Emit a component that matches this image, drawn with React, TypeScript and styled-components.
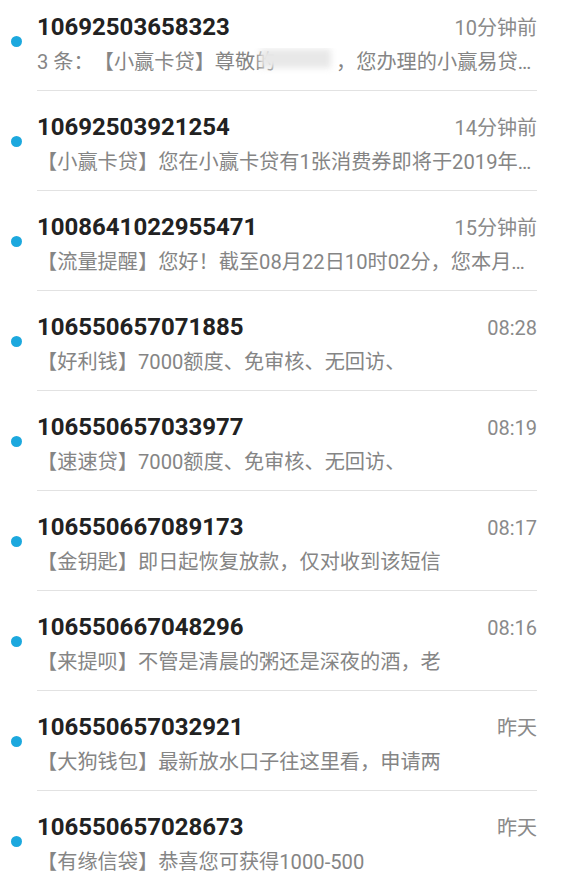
import React from 'react';
import styled, { createGlobalStyle } from 'styled-components';

const GlobalStyle = createGlobalStyle`
  html, body {
    margin: 0;
    padding: 0;
    background: #ffffff;
  }
  body {
    width: 562px;
    height: 880px;
    overflow: hidden;
    font-family: Roboto, "Noto Sans CJK SC", sans-serif;
    text-spacing-trim: space-all;
  }
`;

const List = styled.div`
  margin-top: -9px;
  display: flex;
  flex-direction: column;
`;

const Item = styled.div`
  display: flex;
  align-items: flex-start;
  height: 100px;
`;

const UnreadDot = styled.span`
  flex: none;
  width: 11px;
  height: 11px;
  margin: 45px 15px 0 11px;
  border-radius: 50%;
  background: #1ca8de;
`;

const Body = styled.div`
  flex: 1;
  min-width: 0;
  height: 100px;
  box-sizing: border-box;
  margin-right: 25px;
  padding-top: 21px;
  border-bottom: 1px solid #e2e2e2;
`;

const Header = styled.div`
  display: flex;
  align-items: baseline;
  justify-content: space-between;
  line-height: 30px;
`;

const Sender = styled.span`
  font-size: 24px;
  font-weight: 700;
  color: #222222;
`;

const Time = styled.span`
  font-size: 20px;
  color: #8a8a8a;
`;

const Preview = styled.div`
  margin-top: 5px;
  font-size: 20.2px;
  line-height: 28px;
  color: #858585;
  white-space: nowrap;
  overflow: hidden;
  text-spacing-trim: space-all;
`;

// blurred-out name in the first message
const Masked = styled.span`
  position: relative;
  display: inline-block;
  color: transparent;

  &::after {
    content: '';
    position: absolute;
    left: -15px;
    right: 5px;
    top: 1px;
    height: 19px;
    background: #e8e8e8;
    filter: blur(3px);
  }
`;

interface Message {
  sender: string;
  time: string;
  preview: React.ReactNode;
}

const messages: Message[] = [
  {
    sender: '10692503658323',
    time: '10分钟前',
    preview: (
      <>
        3 条：【小赢卡贷】尊敬的<Masked>某某某</Masked>，您办理的小赢易贷…
      </>
    ),
  },
  {
    sender: '10692503921254',
    time: '14分钟前',
    preview: '【小赢卡贷】您在小赢卡贷有1张消费券即将于2019年…',
  },
  {
    sender: '1008641022955471',
    time: '15分钟前',
    preview: '【流量提醒】您好！截至08月22日10时02分，您本月…',
  },
  {
    sender: '106550657071885',
    time: '08:28',
    preview: '【好利钱】7000额度、免审核、无回访、',
  },
  {
    sender: '106550657033977',
    time: '08:19',
    preview: '【速速贷】7000额度、免审核、无回访、',
  },
  {
    sender: '106550667089173',
    time: '08:17',
    preview: '【金钥匙】即日起恢复放款，仅对收到该短信',
  },
  {
    sender: '106550667048296',
    time: '08:16',
    preview: '【来提呗】不管是清晨的粥还是深夜的酒，老',
  },
  {
    sender: '106550657032921',
    time: '昨天',
    preview: '【大狗钱包】最新放水口子往这里看，申请两',
  },
  {
    sender: '106550657028673',
    time: '昨天',
    preview: '【有缘信袋】恭喜您可获得1000-500',
  },
];

const App: React.FC = () => {
  return (
    <>
      <GlobalStyle />
      <List>
        {messages.map((m) => (
          <Item key={m.sender}>
            <UnreadDot />
            <Body>
              <Header>
                <Sender>{m.sender}</Sender>
                <Time>{m.time}</Time>
              </Header>
              <Preview>{m.preview}</Preview>
            </Body>
          </Item>
        ))}
      </List>
    </>
  );
};

export default App;
